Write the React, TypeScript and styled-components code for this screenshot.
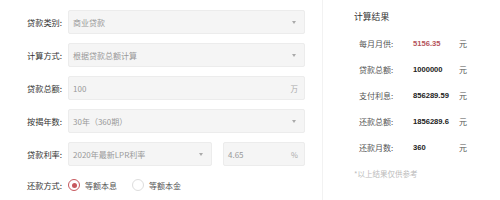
import React from "react";
import styled, { createGlobalStyle } from "styled-components";

const Global = createGlobalStyle`
  html, body { margin: 0; padding: 0; background: #fff; }
  body { font-family: "Noto Sans CJK SC", "Noto Sans", Arial, sans-serif; color: #333; }
  * { box-sizing: border-box; }
`;

const Page = styled.div`
  width: 500px;
  height: 200px;
  display: flex;
  overflow: hidden;
`;

const Form = styled.div`
  width: 322px;
  padding: 10px 0 0 27px;
  display: flex;
  flex-direction: column;
  gap: 9px;
`;

const Row = styled.div`
  display: flex;
  align-items: center;
  height: 24px;
`;

const Label = styled.div`
  width: 41px;
  font-size: 8.2px;
  color: #333;
  white-space: nowrap;
`;

const Field = styled.div<{ $w: number; $ml?: number }>`
  width: ${(p) => p.$w}px;
  margin-left: ${(p) => p.$ml ?? 0}px;
  height: 24px;
  background: #f5f5f5;
  border: 1px solid #ececec;
  border-radius: 2px;
  display: flex;
  align-items: center;
  justify-content: space-between;
  padding: 0 6px 0 4px;
  font-size: 8px;
  color: #999;
`;

const Arrow = styled.span`
  width: 0;
  height: 0;
  border-left: 2.5px solid transparent;
  border-right: 2.5px solid transparent;
  border-top: 3px solid #aaa;
  margin-right: 2px;
`;

const Unit = styled.span`
  font-size: 7.5px;
  color: #aaa;
`;

const RadioRow = styled.div`
  display: flex;
  align-items: center;
  height: 24px;
  margin-top: -2px;
`;

const RadioOption = styled.label`
  display: flex;
  align-items: center;
  gap: 5px;
  font-size: 8px;
  color: #555;
  margin-right: 15px;
`;

const Circle = styled.span<{ $on?: boolean }>`
  width: 12px;
  height: 12px;
  border-radius: 50%;
  border: 1px solid ${(p) => (p.$on ? "#c7585e" : "#ddd")};
  background: #fff;
  display: flex;
  align-items: center;
  justify-content: center;
  &::after {
    content: "";
    width: 5px;
    height: 5px;
    border-radius: 50%;
    background: ${(p) => (p.$on ? "#c7585e" : "transparent")};
  }
`;

const Result = styled.div`
  flex: 1;
  border-left: 1px solid #f2f2f2;
  padding: 10px 0 0 31px;
`;

const Title = styled.div`
  font-size: 8.8px;
  color: #333;
  height: 14px;
  line-height: 14px;
  margin-bottom: 6px;
`;

const ResRow = styled.div`
  display: grid;
  grid-template-columns: 54px 46px auto;
  align-items: center;
  height: 26px;
  padding-left: 5px;
  font-size: 8px;
`;

const ResLabel = styled.span`
  color: #555;
`;

const ResValue = styled.span<{ $red?: boolean }>`
  font-family: Arial, "Liberation Sans", sans-serif;
  font-weight: bold;
  font-size: 7.6px;
  color: ${(p) => (p.$red ? "#b5545c" : "#222")};
`;

const ResUnit = styled.span`
  color: #555;
`;

const Note = styled.div`
  font-size: 7.5px;
  line-height: 11px;
  color: #bbb;
  margin-top: 8px;
`;

const results: [string, string, boolean][] = [
  ["每月月供:", "5156.35", true],
  ["贷款总额:", "1000000", false],
  ["支付利息:", "856289.59", false],
  ["还款总额:", "1856289.6", false],
  ["还款月数:", "360", false],
];

export default function App() {
  return (
    <>
      <Global />
      <Page>
        <Form>
          <Row>
            <Label>贷款类别:</Label>
            <Field $w={237}>商业贷款<Arrow /></Field>
          </Row>
          <Row>
            <Label>计算方式:</Label>
            <Field $w={237}>根据贷款总额计算<Arrow /></Field>
          </Row>
          <Row>
            <Label>贷款总额:</Label>
            <Field $w={237}>100<Unit>万</Unit></Field>
          </Row>
          <Row>
            <Label>按揭年数:</Label>
            <Field $w={237}>30年（360期）<Arrow /></Field>
          </Row>
          <Row>
            <Label>贷款利率:</Label>
            <Field $w={144}>2020年最新LPR利率<Arrow /></Field>
            <Field $w={82} $ml={11}>4.65<Unit>%</Unit></Field>
          </Row>
          <RadioRow>
            <Label>还款方式:</Label>
            <RadioOption><Circle $on />等额本息</RadioOption>
            <RadioOption><Circle />等额本金</RadioOption>
          </RadioRow>
        </Form>
        <Result>
          <Title>计算结果</Title>
          {results.map(([l, v, r]) => (
            <ResRow key={l}>
              <ResLabel>{l}</ResLabel>
              <ResValue $red={r}>{v}</ResValue>
              <ResUnit>元</ResUnit>
            </ResRow>
          ))}
          <Note>*以上结果仅供参考</Note>
        </Result>
      </Page>
    </>
  );
}
